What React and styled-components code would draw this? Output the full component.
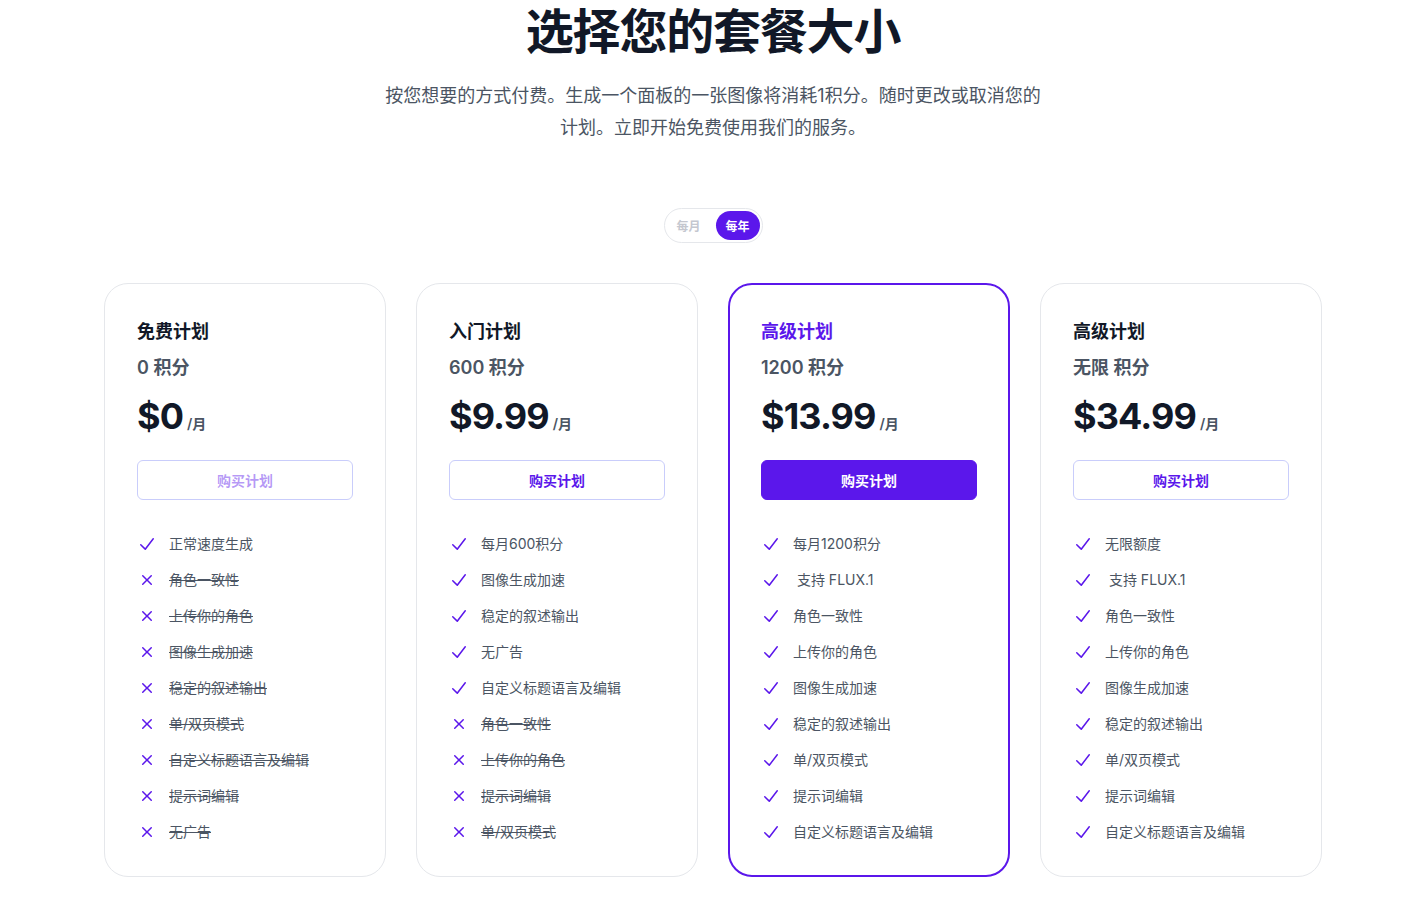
import React, { useState } from 'react'
import styled, { createGlobalStyle, css } from 'styled-components'

const PURPLE = '#5b17eb'

const GlobalStyle = createGlobalStyle`
  * { box-sizing: border-box; }
  body {
    margin: 0;
    background: #ffffff;
    font-family: Inter, "Noto Sans CJK SC", sans-serif;
    -webkit-font-smoothing: antialiased;
  }
`

const Page = styled.div`
  padding: 8px 0 40px;
  display: flex;
  flex-direction: column;
  align-items: center;
`

const Title = styled.h1`
  margin: 0;
  font-size: 48px;
  line-height: 48px;
  font-weight: 700;
  letter-spacing: -0.025em;
  color: #111827;
  text-align: center;
`

const Subtitle = styled.p`
  margin: 24px 0 0;
  max-width: 668px;
  font-size: 18px;
  line-height: 32px;
  color: #4b5563;
  text-align: center;
`

const Toggle = styled.div`
  margin-top: 64px;
  display: flex;
  gap: 5px;
  padding: 2px;
  border: 1px solid #e5e7eb;
  border-radius: 999px;
`

const ToggleButton = styled.button`
  width: 44px;
  height: 29px;
  border: 0;
  border-radius: 999px;
  font-family: inherit;
  font-size: 12px;
  font-weight: 600;
  cursor: pointer;
  background: ${p => (p.$active ? PURPLE : 'transparent')};
  color: ${p => (p.$active ? '#ffffff' : '#c4c7cf')};
`

const Grid = styled.div`
  margin-top: 40px;
  display: grid;
  grid-template-columns: repeat(4, 282px);
  gap: 30px;
  justify-content: center;
`

const Card = styled.div`
  border-radius: 24px;
  padding: 34px 32px 32px;
  border: 1px solid #e5e7eb;
  ${p => p.$featured && css`
    border: 2px solid ${PURPLE};
    padding: 33px 31px 31px;
  `}
`

const PlanName = styled.h3`
  margin: 0;
  font-size: 18px;
  line-height: 28px;
  font-weight: 600;
  color: ${p => (p.$featured ? PURPLE : '#111827')};
`

const Credits = styled.p`
  margin: 8px 0 0;
  font-size: 18px;
  line-height: 28px;
  font-weight: 600;
  color: #4b5563;
`

const PriceRow = styled.p`
  margin: 14px 0 0;
  display: flex;
  align-items: baseline;
  gap: 4px;
`

const Price = styled.span`
  font-size: 36px;
  line-height: 40px;
  font-weight: 700;
  letter-spacing: -0.025em;
  color: #111827;
`

const Period = styled.span`
  font-size: 14px;
  line-height: 24px;
  font-weight: 600;
  color: #4b5563;
`

const BuyButton = styled.button`
  margin-top: 24px;
  width: 100%;
  height: 40px;
  border-radius: 6px;
  font-family: inherit;
  font-size: 14px;
  font-weight: 600;
  cursor: pointer;
  border: 1px solid #c9cdfb;
  background: #ffffff;
  color: ${PURPLE};
  ${p => p.$featured && css`
    border-color: ${PURPLE};
    background: ${PURPLE};
    color: #ffffff;
  `}
  ${p => p.$muted && css`
    color: rgba(91, 23, 235, 0.45);
  `}
`

const Features = styled.ul`
  margin: 32px 0 0;
  padding: 0;
  list-style: none;
  display: flex;
  flex-direction: column;
  gap: 12px;
`

const Feature = styled.li`
  display: flex;
  gap: 12px;
  font-size: 14px;
  line-height: 24px;
  color: #4b5563;
  text-decoration: ${p => (p.$off ? 'line-through' : 'none')};

  svg {
    flex: none;
    width: 20px;
    height: 24px;
    color: ${PURPLE};
  }
`

const CheckIcon = () => (
  <svg viewBox="0 -2 20 24" fill="currentColor" aria-hidden="true">
    <path fillRule="evenodd" d="M16.704 4.153a.75.75 0 01.143 1.052l-8 10.5a.75.75 0 01-1.127.075l-4.5-4.5a.75.75 0 011.06-1.06l3.894 3.893 7.48-9.817a.75.75 0 011.05-.143z" clipRule="evenodd" />
  </svg>
)

const XIcon = () => (
  <svg viewBox="0 -2 20 24" fill="currentColor" aria-hidden="true">
    <path d="M6.28 5.22a.75.75 0 00-1.06 1.06L8.94 10l-3.72 3.72a.75.75 0 101.06 1.06L10 11.060l3.72 3.72a.75.75 0 101.06-1.06L11.06 10l3.72-3.72a.75.75 0 00-1.06-1.06L10 8.94 6.28 5.22z" />
  </svg>
)

const plans = [
  {
    name: '免费计划',
    credits: '0 积分',
    price: '$0',
    muted: true,
    features: [
      ['正常速度生成', true],
      ['角色一致性', false],
      ['上传你的角色', false],
      ['图像生成加速', false],
      ['稳定的叙述输出', false],
      ['单/双页模式', false],
      ['自定义标题语言及编辑', false],
      ['提示词编辑', false],
      ['无广告', false],
    ],
  },
  {
    name: '入门计划',
    credits: '600 积分',
    price: '$9.99',
    features: [
      ['每月600积分', true],
      ['图像生成加速', true],
      ['稳定的叙述输出', true],
      ['无广告', true],
      ['自定义标题语言及编辑', true],
      ['角色一致性', false],
      ['上传你的角色', false],
      ['提示词编辑', false],
      ['单/双页模式', false],
    ],
  },
  {
    name: '高级计划',
    credits: '1200 积分',
    price: '$13.99',
    featured: true,
    features: [
      ['每月1200积分', true],
      ['\u00a0支持 FLUX.1', true],
      ['角色一致性', true],
      ['上传你的角色', true],
      ['图像生成加速', true],
      ['稳定的叙述输出', true],
      ['单/双页模式', true],
      ['提示词编辑', true],
      ['自定义标题语言及编辑', true],
    ],
  },
  {
    name: '高级计划',
    credits: '无限 积分',
    price: '$34.99',
    features: [
      ['无限额度', true],
      ['\u00a0支持 FLUX.1', true],
      ['角色一致性', true],
      ['上传你的角色', true],
      ['图像生成加速', true],
      ['稳定的叙述输出', true],
      ['单/双页模式', true],
      ['提示词编辑', true],
      ['自定义标题语言及编辑', true],
    ],
  },
]

export default function App() {
  const [yearly, setYearly] = useState(true)

  return (
    <Page>
      <GlobalStyle />
      <Title>选择您的套餐大小</Title>
      <Subtitle>
        按您想要的方式付费。生成一个面板的一张图像将消耗1积分。随时更改或取消您的计划。立即开始免费使用我们的服务。
      </Subtitle>

      <Toggle>
        <ToggleButton $active={!yearly} onClick={() => setYearly(false)}>每月</ToggleButton>
        <ToggleButton $active={yearly} onClick={() => setYearly(true)}>每年</ToggleButton>
      </Toggle>

      <Grid>
        {plans.map((plan, i) => (
          <Card key={i} $featured={plan.featured}>
            <PlanName $featured={plan.featured}>{plan.name}</PlanName>
            <Credits>{plan.credits}</Credits>
            <PriceRow>
              <Price>{plan.price}</Price>
              <Period>/月</Period>
            </PriceRow>
            <BuyButton $featured={plan.featured} $muted={plan.muted}>购买计划</BuyButton>
            <Features>
              {plan.features.map(([text, on]) => (
                <Feature key={text} $off={!on}>
                  {on ? <CheckIcon /> : <XIcon />}
                  <span>{text}</span>
                </Feature>
              ))}
            </Features>
          </Card>
        ))}
      </Grid>
    </Page>
  )
}
